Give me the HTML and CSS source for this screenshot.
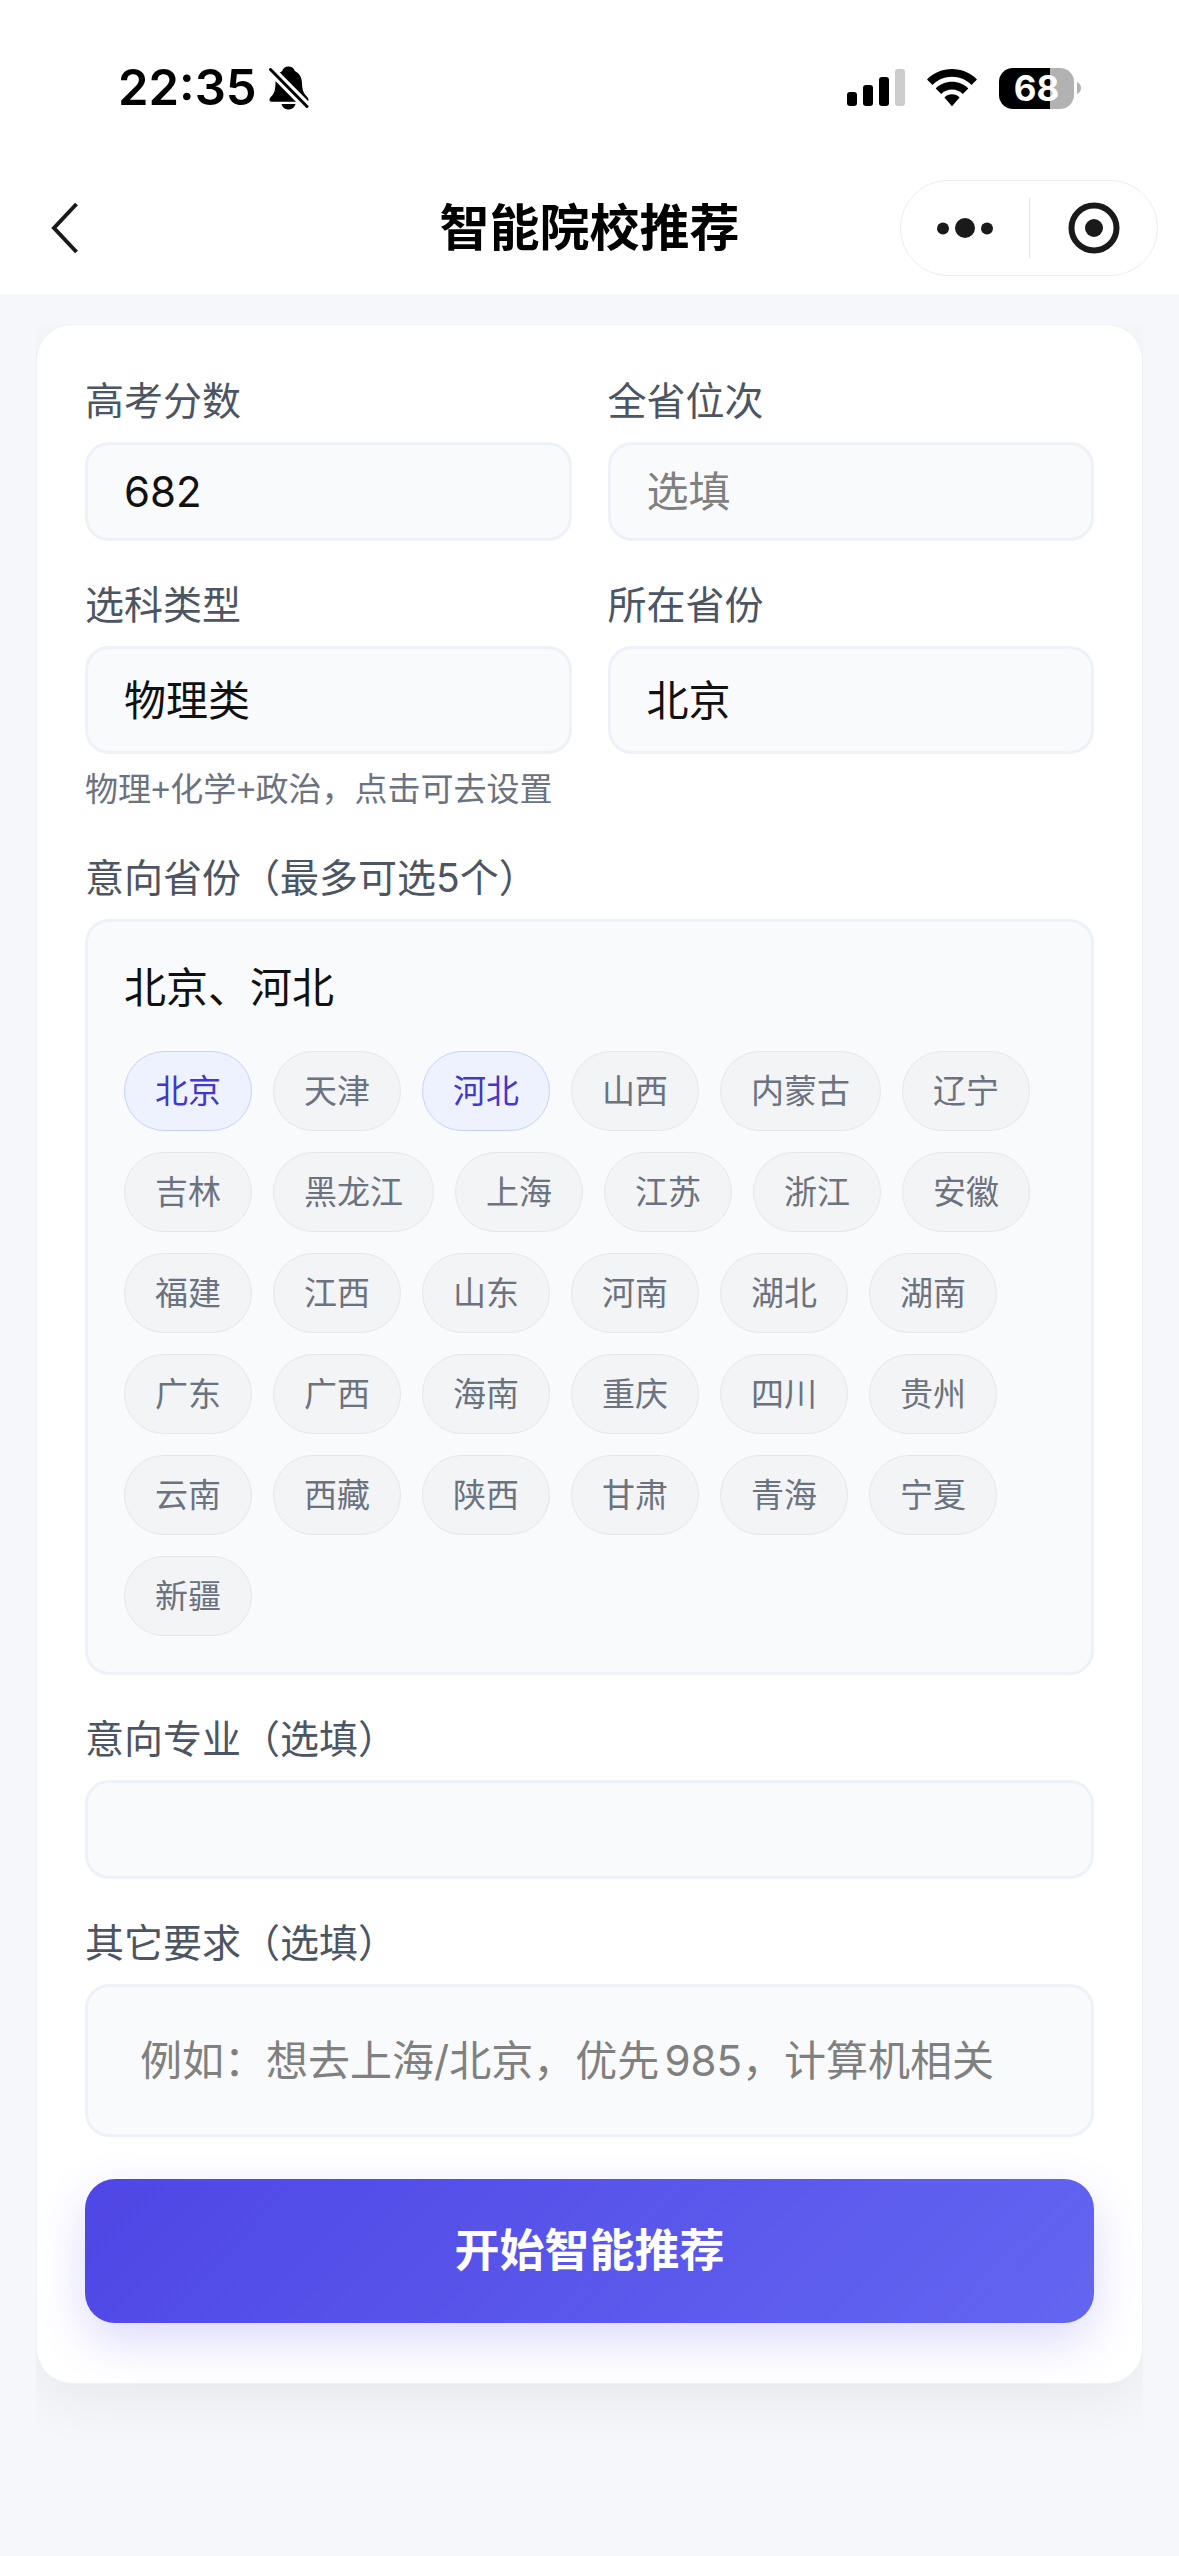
FILE: index.html
```html
<!DOCTYPE html>
<html lang="zh-CN">
<head>
<meta charset="utf-8">
<meta name="viewport" content="width=device-width, initial-scale=1">
<title>智能院校推荐</title>
<link rel="stylesheet" href="styles.css">
</head>
<body>
<header class="header">
  <div class="status-bar">
    <div class="status-left">
      <span class="clock">22:35</span>
      <svg class="icon-bell" viewBox="0 0 40 44" width="40" height="44" aria-hidden="true">
        <path d="M19.500 0.500c3.300 0 5.600 1.800 6.300 4.600 4.600 2.200 7 6.500 7.200 12 .2 7 1.600 10.300 4.600 13.200 1.400 1.500 1.900 2.500 1.900 3.400 0 1.300-.9 2.100-2.500 2.100H3c-1.600 0-2.500-.8-2.500-2.100 0-.9.500-1.900 1.900-3.400C5.400 27.300 6.300 24 6.500 17c.2-5.500 2.400-9.700 6.700-11.900.7-2.800 3-4.600 6.300-4.600z"/>
        <path d="M12.500 38h14c-.8 3.400-3.600 5.500-7 5.500s-6.200-2.100-7-5.500z"/>
        <path class="bell-gap" d="M1.500 3.500 38 40.500"/>
        <path class="bell-slash" d="M1.500 3.500 38 40.500"/>
      </svg>
    </div>
    <div class="status-right">
      <svg viewBox="0 0 58 38" width="58" height="38" aria-hidden="true">
        <rect x="0" y="23" width="10" height="14" rx="3"/>
        <rect x="16" y="16" width="10" height="21" rx="3"/>
        <rect x="32" y="8" width="10" height="29" rx="3"/>
        <rect x="48" y="0" width="10" height="37" rx="3" fill="#ccc"/>
      </svg>
      <svg class="icon-wifi" viewBox="0 0 50 38" width="50" height="38" aria-hidden="true">
        <path d="M25 0C34.500 0 43.500 3.700 50 10.500L44.500 16C39.300 10.700 32.400 7.800 25 7.800S10.700 10.700 5.500 16L0 10.500C6.500 3.700 15.500 0 25 0z"/>
        <path d="M25 12.800c6.200 0 12 2.400 16.300 6.600l-5.500 5.600c-2.900-2.800-6.700-4.400-10.800-4.400S17.100 22.200 14.200 25l-5.500-5.600C13 15.200 18.800 12.800 25 12.800z"/>
        <path d="M25 25.300c2.900 0 5.600 1.100 7.600 3.100L25 37.200l-7.600-8.800c2-2 4.700-3.100 7.600-3.100z"/>
      </svg>
      <div class="battery">
        <span class="battery-body">68</span>
        <svg viewBox="0 0 4 12" width="4" height="12" aria-hidden="true"><path d="M0 0c2.500 1 4 3.300 4 6s-1.500 5-4 6z" fill="#b2b2b2"/></svg>
      </div>
    </div>
  </div>
  <nav class="nav-bar">
    <button class="back" type="button" aria-label="返回">
      <svg viewBox="0 0 28 52" width="28" height="52" aria-hidden="true"><path d="M25.500 2 3 26l22.500 24" fill="none" stroke="#1a1a1a" stroke-width="4"/></svg>
    </button>
    <h1 class="title">智能院校推荐</h1>
    <div class="capsule">
      <button type="button" aria-label="更多">
        <svg viewBox="0 0 56 20" width="56" height="20" aria-hidden="true"><circle cx="6" cy="10.500" r="6"/><circle cx="28" cy="10" r="10"/><circle cx="50" cy="10.500" r="6"/></svg>
      </button>
      <button type="button" aria-label="关闭">
        <svg viewBox="0 0 52 52" width="52" height="52" aria-hidden="true"><circle cx="26" cy="26" r="22.500" fill="none" stroke="#1a1a1a" stroke-width="6"/><circle cx="26" cy="26" r="9"/></svg>
      </button>
    </div>
  </nav>
</header>

<main class="page">
  <form class="card">
    <div class="field-row">
      <div class="field">
        <label for="score">高考分数</label>
        <input class="control" id="score" type="text" inputmode="numeric" value="682">
      </div>
      <div class="field">
        <label for="rank">全省位次</label>
        <input class="control" id="rank" type="text" inputmode="numeric" placeholder="选填">
      </div>
    </div>
    <div class="field-row">
      <div class="field">
        <label for="subject">选科类型</label>
        <select class="control picker" id="subject"><option>物理类</option><option>历史类</option></select>
        <a class="hint" href="#subject">物理+化学+政治，点击可去设置</a>
      </div>
      <div class="field">
        <label for="province">所在省份</label>
        <select class="control picker" id="province"><option>北京</option><option>天津</option></select>
      </div>
    </div>
    <div class="field">
      <span class="label" id="targets">意向省份（最多可选5个）</span>
      <div class="chip-box" role="group" aria-labelledby="targets">
        <p class="chosen">北京、河北</p>
        <div class="chips">
          <button type="button" class="chip selected" aria-pressed="true">北京</button>
          <button type="button" class="chip">天津</button>
          <button type="button" class="chip selected" aria-pressed="true">河北</button>
          <button type="button" class="chip">山西</button>
          <button type="button" class="chip">内蒙古</button>
          <button type="button" class="chip">辽宁</button>
          <button type="button" class="chip">吉林</button>
          <button type="button" class="chip">黑龙江</button>
          <button type="button" class="chip">上海</button>
          <button type="button" class="chip">江苏</button>
          <button type="button" class="chip">浙江</button>
          <button type="button" class="chip">安徽</button>
          <button type="button" class="chip">福建</button>
          <button type="button" class="chip">江西</button>
          <button type="button" class="chip">山东</button>
          <button type="button" class="chip">河南</button>
          <button type="button" class="chip">湖北</button>
          <button type="button" class="chip">湖南</button>
          <button type="button" class="chip">广东</button>
          <button type="button" class="chip">广西</button>
          <button type="button" class="chip">海南</button>
          <button type="button" class="chip">重庆</button>
          <button type="button" class="chip">四川</button>
          <button type="button" class="chip">贵州</button>
          <button type="button" class="chip">云南</button>
          <button type="button" class="chip">西藏</button>
          <button type="button" class="chip">陕西</button>
          <button type="button" class="chip">甘肃</button>
          <button type="button" class="chip">青海</button>
          <button type="button" class="chip">宁夏</button>
          <button type="button" class="chip">新疆</button>
        </div>
      </div>
    </div>
    <div class="field">
      <label for="major">意向专业（选填）</label>
      <input class="control" id="major" type="text">
    </div>
    <div class="field">
      <label for="other">其它要求（选填）</label>
      <textarea class="control notes" id="other" rows="1" placeholder="例如：想去上海/北京，优先985，计算机相关"></textarea>
    </div>
    <button class="submit" type="submit">开始智能推荐</button>
  </form>
</main>
</body>
</html>
```

FILE: styles.css
```css
* {
  box-sizing: border-box;
}

body {
  margin: 0;
  background: #f5f7fb;
  color: #111;
  font-family: Inter, "Noto Sans CJK SC", sans-serif;
  font-size: 42px;
}

button,
input,
select,
textarea {
  margin: 0;
  font: inherit;
  color: inherit;
}

button {
  padding: 0;
  border: 0;
  background: none;
}

svg {
  display: block;
}

/* Header */
.header {
  background: #fff;
}

.status-bar {
  display: flex;
  align-items: center;
  justify-content: space-between;
  height: 176px;
  padding: 0 98px 0 118px;
  color: #000;
}

.status-left {
  display: flex;
  align-items: center;
  gap: 12px;
}

.clock {
  font-size: 49px;
  font-weight: 600;
  line-height: 60px;
}

.bell-gap,
.bell-slash {
  fill: none;
}

.bell-gap {
  stroke: #fff;
  stroke-width: 9;
}

.bell-slash {
  stroke: #000;
  stroke-width: 3;
  stroke-linecap: round;
}

.status-right {
  display: flex;
  align-items: center;
  gap: 22px;
}

.battery {
  display: flex;
  align-items: center;
  gap: 3px;
}

.battery-body {
  width: 75px;
  border-radius: 14px;
  background: linear-gradient(90deg, #000 68%, #b2b2b2 68%);
  color: #fff;
  font-size: 35px;
  font-weight: 700;
  line-height: 41px;
  text-align: center;
}

.nav-bar {
  display: grid;
  grid-template-columns: 1fr auto 1fr;
  align-items: center;
  height: 118px;
  padding: 0 21px 14px;
}

.back {
  justify-self: start;
  margin-left: 30px;
}

.title {
  margin: 0;
  color: #000;
  font-size: 50px;
  font-weight: 700;
  line-height: 72px;
}

.capsule {
  display: grid;
  grid-template-columns: 1fr 1fr;
  justify-self: end;
  align-items: center;
  width: 258px;
  height: 96px;
  border: 1px solid #ececec;
  border-radius: 48px;
  fill: #1a1a1a;
}

.capsule button {
  display: grid;
  place-items: center;
  height: 60px;
}

.capsule button + button {
  border-left: 1px solid #e2e2e2;
}

/* Form */
.page {
  margin: 30px 36px 0;
  padding-bottom: 90px;
  overflow: hidden;
}

.card {
  display: flex;
  flex-direction: column;
  gap: 36px;
  padding: 48px 48px 60px;
  border: 1px solid #eef1f6;
  border-radius: 36px;
  background: #fff;
  box-shadow: 0 18px 54px rgba(0, 0, 0, 0.06);
}

.field-row {
  display: grid;
  grid-template-columns: 1fr 1fr;
  gap: 36px;
  align-items: start;
}

.field {
  display: flex;
  flex-direction: column;
  min-width: 0;
}

label,
.label {
  margin-bottom: 14px;
  color: #4b5563;
  font-size: 39px;
  line-height: 55px;
}

.control,
.chip-box {
  width: 100%;
  border: 3px solid #eef1f7;
  border-radius: 24px;
  background: #f9fafc;
}

.control {
  height: 99px;
  padding: 0 36px;
  outline: 0;
}

.control::placeholder {
  color: #808080;
  opacity: 1;
}

.picker {
  height: 108px;
  appearance: none;
}

.notes {
  display: block;
  height: auto;
  padding: 48px 52px;
  line-height: 51px;
  resize: none;
  overflow: hidden;
  text-autospace: normal;
}

.hint {
  margin-top: 12px;
  color: #6b7280;
  font-family: "Liberation Sans", "Noto Sans CJK SC", sans-serif;
  font-size: 33px;
  line-height: 48px;
  text-decoration: none;
}

.chip-box {
  padding: 36px;
}

.chosen {
  margin: 0 0 33px;
  line-height: 60px;
}

.chips {
  display: flex;
  flex-wrap: wrap;
  gap: 21px;
}

.chip {
  padding: 0 30px;
  border: 1px solid #e5e7eb;
  border-radius: 40px;
  background: #f3f4f6;
  color: #6b7280;
  font-size: 33px;
  line-height: 78px;
}

.chip.selected {
  border-color: #c7d2fe;
  background: #eef2ff;
  color: #4338ca;
}

.submit {
  margin-top: 6px;
  border-radius: 30px;
  background: linear-gradient(135deg, #4f46e5, #6366f1);
  box-shadow: 0 18px 48px rgba(79, 70, 229, 0.2);
  color: #fff;
  font-size: 45px;
  font-weight: 700;
  line-height: 144px;
}
```
